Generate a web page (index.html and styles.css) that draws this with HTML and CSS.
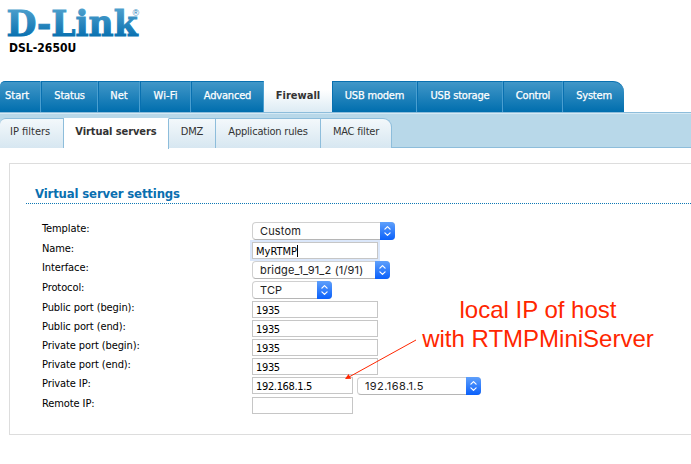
FILE: index.html
```html
<!DOCTYPE html>
<html lang="en">
<head>
<meta charset="utf-8">
<title>D-Link DSL-2650U</title>
<link rel="stylesheet" href="styles.css">
</head>
<body>
<svg width="0" height="0" class="defs"><defs><symbol id="chev" viewBox="0 0 15 18"><path d="M4.9 7.2 7.5 4.6l2.6 2.6M4.9 10.8l2.6 2.6 2.6-2.6" fill="none" stroke="#fff" stroke-width="1.2" stroke-linecap="round" stroke-linejoin="round"/></symbol></defs></svg>
<header class="header">
  <svg class="logo" width="144" height="41" viewBox="0 0 144 41">
    <defs><linearGradient id="g" gradientUnits="userSpaceOnUse" x1="0" y1="10" x2="0" y2="37"><stop offset="0" stop-color="#4a9dcb"/><stop offset="1" stop-color="#0870b0"/></linearGradient></defs>
    <text class="brand" x="6.5" y="36" textLength="131" lengthAdjust="spacingAndGlyphs">D-Link</text>
    <text class="reg" x="132.5" y="16">®</text>
  </svg>
  <div class="model">DSL-2650U</div>
</header>
<nav class="main">
  <a class="w1">Start</a><a class="w2">Status</a><a class="w3">Net</a><a class="w4">Wi-Fi</a><a class="w5">Advanced</a><a class="w6 on">Firewall</a><a class="w7">USB modem</a><a class="w8">USB storage</a><a class="w9">Control</a><a class="w10">System</a>
</nav>
<nav class="sub">
  <a class="s1">IP filters</a><a class="s2 on">Virtual servers</a><a class="s3">DMZ</a><a class="s4">Application rules</a><a class="s5">MAC filter</a>
</nav>
<main class="panel">
  <h1>Virtual server settings</h1>
  <form class="form">
    <label>Template:</label><div><span class="select c1">Custom<i><svg><use href="#chev"/></svg></i></span></div>
    <label>Name:</label><div><span class="input focus">MyRTMP<b class="caret"></b></span></div>
    <label>Interface:</label><div><span class="select c2">bridge_1_91_2 (1/91)<i><svg><use href="#chev"/></svg></i></span></div>
    <label>Protocol:</label><div><span class="select c3">TCP<i><svg><use href="#chev"/></svg></i></span></div>
    <label>Public port (begin):</label><div><span class="input">1935</span></div>
    <label>Public port (end):</label><div><span class="input">1935</span></div>
    <label>Private port (begin):</label><div><span class="input">1935</span></div>
    <label>Private port (end):</label><div><span class="input">1935</span></div>
    <label>Private IP:</label><div><span class="input short">192.168.1.5</span><span class="select c4">192.168.1.5<i><svg><use href="#chev"/></svg></i></span></div>
    <label>Remote IP:</label><div><span class="input short"></span></div>
  </form>
</main>
<div class="note">local IP of host<br>with RTMPMiniServer</div>
<svg class="arrow" width="74" height="44" viewBox="343 337 74 44"><path d="M416 340 349 377" stroke="#ff2600" stroke-width="1"/><path d="m345 379 3.5-4.9 2.7 4.7z" fill="#ff2600"/></svg>
</body>
</html>
```
FILE: styles.css
```css
* { box-sizing: border-box; }
body { margin: 0; width: 691px; height: 464px; overflow: hidden; background: #fff; color: #000; font: 11px/14px "DejaVu Sans Condensed", "DejaVu Sans", sans-serif; font-stretch: condensed; letter-spacing: -0.2px; position: relative; }
.defs { position: absolute; }
.header { height: 81px; }
.logo { display: block; }
.brand { font: bold 35px "DejaVu Serif", serif; fill: url(#g); stroke: url(#g); stroke-width: 1; letter-spacing: 0; }
.reg { font: 9px "Liberation Sans", sans-serif; fill: #2583bb; letter-spacing: 0; }
.model { padding-left: 9px; font-weight: bold; font-size: 12px; letter-spacing: .05px; line-height: 15px; }
nav { display: flex; white-space: nowrap; }
nav a { flex: none; text-align: center; }
.main { height: 31px; }
.main a { height: 31px; padding-top: 7px; border-top: 1px solid #0870b0; border-right: 1px solid #4a9fd0; border-left: 1px solid #0870b0; background: linear-gradient(#4197c8, #006eae); color: #fff; -webkit-text-stroke: .25px #fff; }
.main .on { background: linear-gradient(#fff 25%, #dcebf4); color: #333; font-weight: bold; letter-spacing: 0; border-color: #fff transparent transparent; border-width: 1px 0 0; -webkit-text-stroke: 0; }
.main .w1 { width: 41px; border-left: 0; border-top-left-radius: 5px; text-align: left; padding-left: 5px; letter-spacing: 0; }
.w2 { width: 57px; } .w3 { width: 42px; } .w4 { width: 51px; } .w5 { width: 73px; } .w6 { width: 68px; } .w7 { width: 85px; } .w8 { width: 86px; } .w9 { width: 60px; }
.w3, .w4 { letter-spacing: .1px; }
.main .w10 { width: 61px; border-right: 0; border-top-right-radius: 11px; }
.sub { height: 36px; padding-top: 5px; background: #b8d8e9; border-top: 1px solid #8dbddb; border-bottom: 1px solid #8dbddb; box-shadow: inset 0 1px #d5e9f4; }
.sub a { height: 30px; padding-top: 6px; padding-bottom: 0; color: #333; background: linear-gradient(#f3f8fb, #d7e7f1); border-top: 1px solid #8dbddb; border-right: 1px solid #8dbddb; }
.sub .on { height: 31px; background: #fff; font-weight: bold; letter-spacing: -.08px; padding: 6px 0 0 0; border-top-color: #fff; }
.sub .s1 { width: 64px; border-top-left-radius: 6px; text-align: left; padding-left: 10px; letter-spacing: 0; } .s2 { width: 105px; } .s3 { width: 47px; } .s4 { width: 105px; } .sub .s5 { width: 71px; border-top-right-radius: 9px; }
.panel { margin: 15px 0 0 9px; height: 272px; border: 1px solid #ddd; border-right: 0; padding: 22px 0 0 16px; }
h1 { margin: 0; padding: 0 0 0 9px; height: 18px; font-size: 13px; line-height: 15px; color: #0a6fb0; letter-spacing: -.15px; border-bottom: 1px dotted #0f78b4; }
.form { display: grid; grid-template-columns: 210px 1fr; grid-template-rows: 20px 19px 20px 20px 19px 19px 19px 19px 20px 17px; padding: 18px 0 0 16px; }
.form > div { display: flex; gap: 4px; }
label { line-height: 13px; letter-spacing: -.1px; }
.input { display: block; position: relative; width: 126px; height: 17px; border: 1px solid #c6c6c6; padding-left: 3px; line-height: 17px; letter-spacing: -.35px; background: #fff; }
.short { width: 101px; }
.focus { box-shadow: 0 0 0 2px #dbe7fa; letter-spacing: 0; }
.caret { display: inline-block; width: 1px; height: 12px; background: #000; vertical-align: -2px; }
.select { position: relative; display: block; height: 18px; border: 1px solid #d0d0d0; border-bottom-color: #b5b5b5; border-radius: 4px; padding-left: 7px; font: 11px/17px Inter, sans-serif; letter-spacing: .15px; color: #222; }
.select i { position: absolute; top: -1px; right: -1px; width: 15px; height: 18px; border-radius: 0 4px 4px 0; background: linear-gradient(#5fa0fb, #0a60fb); }
.select svg { display: block; width: 15px; height: 18px; }
.c1 { width: 143px; } .c2 { width: 138px; } .c3 { width: 80px; } .c4 { width: 124px; letter-spacing: .4px; }
.note { position: absolute; left: 418px; top: 295px; width: 240px; text-align: center; font: 24px/29px "Liberation Sans", sans-serif; color: #ff2600; letter-spacing: 0; white-space: nowrap; }
.arrow { position: absolute; left: 343px; top: 337px; }
```
